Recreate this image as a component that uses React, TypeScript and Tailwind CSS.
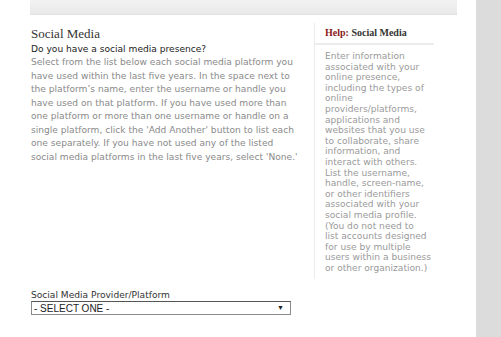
export default function App() {
  return (
    <div className="flex h-[337px] w-[501px] overflow-hidden bg-white font-['DejaVu_Sans',sans-serif]">
      <main className="w-[476px] px-[30px]">
        <div className="h-[15px] w-[427px] border-b border-[#e2e2e2] bg-linear-to-b from-[#f2f2f2] to-[#e9e9e9]" />

        <div className="mt-[8px] flex">
          <section className="w-[284px] pt-[3px] pl-px pr-[15px]">
            <h2 className="font-['Liberation_Serif',serif] text-[13px] leading-[16px] text-[#333]">
              Social Media
            </h2>
            <p className="mt-[1px] text-[9.1px] leading-[13px] text-[#222]">
              Do you have a social media presence?
            </p>
            <p className="text-[9.1px] leading-[13.5px] text-[#8a8a8a]">
              Select from the list below each social media platform you have used within the last five years. In the space next to the platform’s name, enter the username or handle you have used on that platform. If you have used more than one platform or more than one username or handle on a single platform, click the 'Add Another' button to list each one separately. If you have not used any of the listed social media platforms in the last five years, select 'None.'
            </p>
          </section>

          <aside className="w-[120px] border-l border-[#ececec]">
            <div className="border-b-2 border-[#ececec] py-[4px] pl-[10px] font-['Liberation_Serif',serif] text-[10px] font-bold leading-[12px] text-[#333]">
              <span className="text-[#8b1a1a]">Help:</span> Social Media
            </div>
            <p className="pt-[6px] pb-[6px] pl-[10px] pr-[2px] text-[9.1px] leading-[10.6px] text-[#9a9a9a]">
              Enter information associated with your online presence, including the types of online providers/platforms, applications and websites that you use to collaborate, share information, and interact with others. List the username, handle, screen-name, or other identifiers associated with your social media profile. (You do not need to
              <br />
              list accounts designed for use by multiple users within a business or other organization.)
            </p>
          </aside>
        </div>

        <div className="mt-[11px] pl-px">
          <label className="block text-[9.1px] leading-[11px] text-[#333]">
            Social Media Provider/Platform
          </label>
          <div className="flex h-[14px] w-[260px] items-center justify-between border border-[#8a8a8a] border-t-[#555] pl-[2px] pr-[6px] font-['Liberation_Sans',sans-serif] text-[10px] text-[#222]">
            <span>- SELECT ONE -</span>
            <span className="text-[7px]">▼</span>
          </div>
        </div>
      </main>
      <div className="flex-1 bg-[#dcdcdc]" />
    </div>
  );
}
